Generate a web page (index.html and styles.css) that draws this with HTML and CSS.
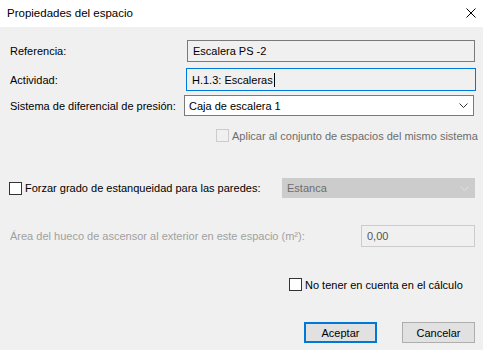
FILE: index.html
```html
<!DOCTYPE html>
<html lang="es">
<head>
    <meta charset="UTF-8">
    <title>Propiedades del espacio</title>
    <link rel="stylesheet" href="styles.css">
</head>
<body>
    <div class="dialog">
        <div class="titlebar">
            <span class="title">Propiedades del espacio</span>
            <svg class="close" width="10" height="10" viewBox="0 0 10 10">
                <path d="M0.5 0.5 L9.5 9.5 M9.5 0.5 L0.5 9.5" stroke="#000" stroke-width="1" fill="none"/>
            </svg>
        </div>

        <div class="content">
            <div class="row row-ref">
                <span class="label">Referencia:</span>
                <div class="textbox readonly w-ref">Escalera PS -2</div>
            </div>
            <div class="row row-act">
                <span class="label">Actividad:</span>
                <div class="textbox focused w-act">H.1.3: Escaleras<span class="caret"></span></div>
            </div>
            <div class="row row-sys">
                <span class="label">Sistema de diferencial de presión:</span>
                <div class="select w-sys">
                    <span>Caja de escalera 1</span>
                    <svg class="chevron" width="9" height="5" viewBox="0 0 9 5">
                        <path d="M0.5 0.5 L4.5 4.5 L8.5 0.5" stroke="#333" fill="none"/>
                    </svg>
                </div>
            </div>

            <div class="row row-apply">
                <span class="check disabled"></span>
                <span class="check-text disabled-text">Aplicar al conjunto de espacios del mismo sistema</span>
            </div>

            <div class="row row-force">
                <div class="check-group">
                    <span class="check"></span>
                    <span class="check-text">Forzar grado de estanqueidad para las paredes:</span>
                </div>
                <div class="select disabled-select w-force">
                    <span>Estanca</span>
                    <svg class="chevron" width="9" height="5" viewBox="0 0 9 5">
                        <path d="M0.5 0.5 L4.5 4.5 L8.5 0.5" stroke="#e0e0e0" fill="none"/>
                    </svg>
                </div>
            </div>

            <div class="row row-area">
                <span class="label light-text">Área del hueco de ascensor al exterior en este espacio (m²):</span>
                <div class="textbox disabled-box w-area">0,00</div>
            </div>

            <div class="row row-ignore">
                <span class="check"></span>
                <span class="check-text">No tener en cuenta en el cálculo</span>
            </div>

            <div class="row row-buttons">
                <button class="btn btn-default">Aceptar</button>
                <button class="btn">Cancelar</button>
            </div>
        </div>
    </div>
</body>
</html>
```

FILE: styles.css
```css
body {
    margin: 0;
    padding: 0;
    font-family: "Liberation Sans", Arial, sans-serif;
    font-size: 11px;
    color: #000;
    background: #f0f0f0;
}

.dialog {
    width: 483px;
    height: 350px;
    background: #f0f0f0;
    overflow: hidden;
    white-space: nowrap;
}

/* Barra de titulo */
.titlebar {
    height: 27px;
    background: #fff;
    display: flex;
    align-items: center;
    justify-content: space-between;
    padding: 0 7px 0 7px;
}

.title {
    font-size: 11.5px;
    margin-top: -1px;
}

.close {
    display: block;
    margin-top: -2px;
}

.content {
    padding: 13px 8px 0 10px;
}

.row {
    display: flex;
    align-items: center;
}

.label {
    flex: 1;
}

/* Cajas de texto */
.textbox {
    box-sizing: border-box;
    border: 1px solid #7a7a7a;
    padding: 0 5px;
    display: flex;
    align-items: center;
    flex: none;
}

.readonly {
    background: #f0f0f0;
}

.focused {
    border-color: #0078d7;
    background: #f0f0f0;
}

.caret {
    display: inline-block;
    width: 1px;
    height: 14px;
    background: #000;
    margin-left: 1px;
}

.disabled-box {
    border-color: #cccccc;
    background: #f0f0f0;
    color: #545454;
}

.select {
    box-sizing: border-box;
    border: 1px solid #7a7a7a;
    background: #fff;
    display: flex;
    align-items: center;
    justify-content: space-between;
    padding: 0 5px 0 4px;
    flex: none;
}

.disabled-select {
    border-color: #cccccc;
    background: #cccccc;
    color: #6d6d6d;
}

.chevron {
    display: block;
}

.w-ref {
    width: 288px;
    height: 22px;
}

.w-act {
    width: 290px;
    height: 23px;
    margin-right: -1px;
}

.w-sys {
    width: 290px;
    height: 21px;
    margin-right: 1px;
}

.w-force {
    width: 193px;
    height: 20px;
}

.w-area {
    width: 114px;
    height: 22px;
}

.row-act {
    margin-top: 6px;
}

.row-sys {
    margin-top: 4px;
}

/* Casillas */
.check {
    box-sizing: border-box;
    width: 13px;
    height: 13px;
    border: 1px solid #333;
    background: #fff;
    flex: none;
}

.check.disabled {
    border-color: #cccccc;
    background: #f0f0f0;
}

.check-text {
    margin-left: 3px;
}

.disabled-text {
    color: #6d6d6d;
}

.light-text {
    color: #a0a0a0;
}

.check-group {
    display: flex;
    align-items: center;
    flex: 1;
    margin-left: -1px;
}

.row-apply {
    margin-top: 13px;
    height: 13px;
    padding-left: 206px;
}

.row-force {
    margin-top: 36px;
    height: 20px;
}

.row-area {
    margin-top: 27px;
}

.row-ignore {
    margin-top: 31px;
    height: 13px;
    padding-left: 279px;
}

/* Botones */
.row-buttons {
    margin-top: 31px;
    justify-content: flex-end;
    gap: 25px;
}

.btn {
    box-sizing: border-box;
    width: 73px;
    height: 21px;
    background: #e1e1e1;
    border: 1px solid #adadad;
    font-family: inherit;
    font-size: 11px;
    color: #000;
    padding: 0;
}

.btn-default {
    border: 2px solid #0078d7;
}
```
